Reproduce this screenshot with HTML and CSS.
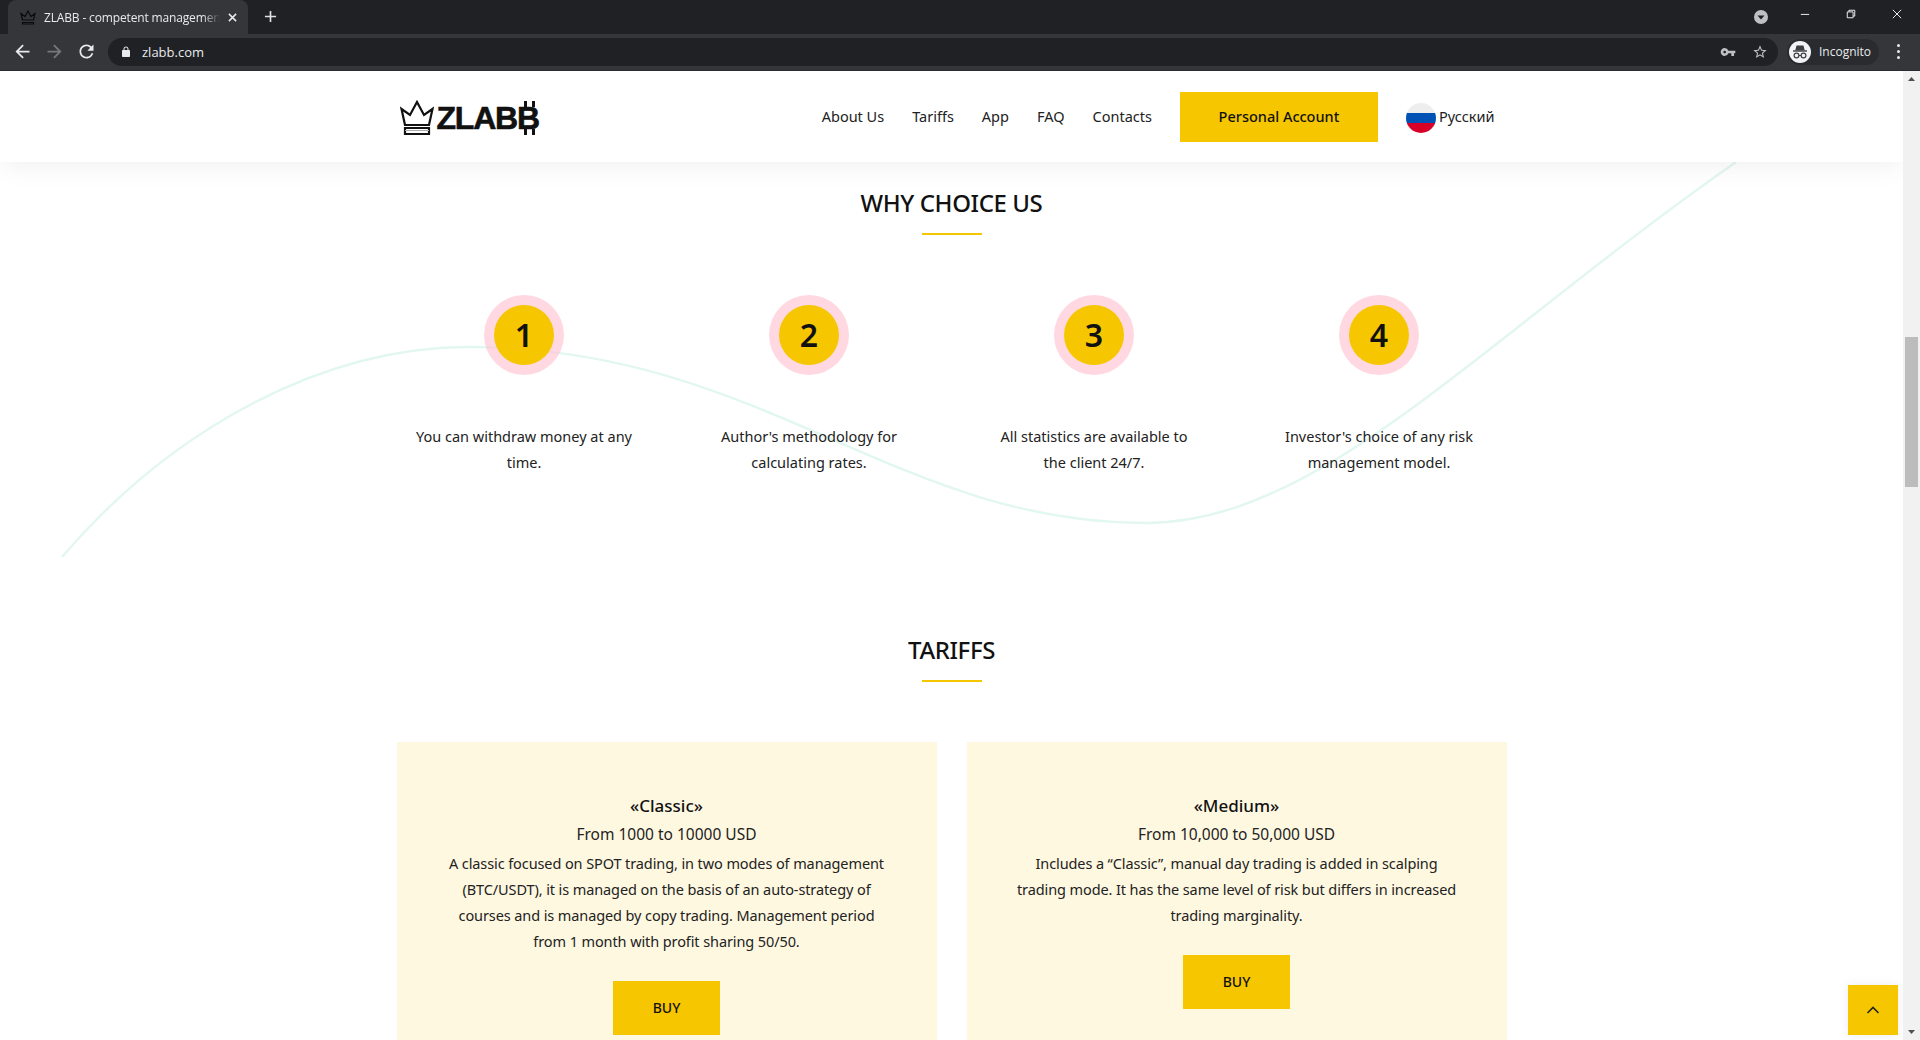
FILE: index.html
```html
<!DOCTYPE html>
<html lang="en">
<head>
  <meta charset="UTF-8" />
  <title>ZLABB - competent management</title>
  <link rel="stylesheet" href="styles.css">
</head>
<body>

<div class="tabstrip">
  <div class="tab">
    <svg class="tab-icon" viewBox="0 0 32 30" fill="none" stroke="#0b0b0c" stroke-width="2.4"><path d="M5 20 2 7l8 6 6-11 6 11 8-6-3 13z"/><path d="M5 25h22v3H5z"/></svg>
    <span class="tab-title">ZLABB - competent management</span>
    <svg class="tab-close" viewBox="0 0 10 10" fill="none" stroke="#e8eaed" stroke-width="1.7"><path d="M1 1l8 8M9 1 1 9"/></svg>
  </div>
  <svg class="new-tab" viewBox="0 0 14 14" fill="none" stroke="#dfe1e5" stroke-width="1.8"><path d="M7 1v12M1 7h12"/></svg>
  <div class="tab-spacer"></div>
  <span class="tab-search"><svg viewBox="0 0 14 14"><path d="M3.5 5.5h7L7 9.5z" fill="#202124"/></svg></span>
  <div class="win-buttons">
    <svg viewBox="0 0 12 12" fill="none" stroke="#e8eaed" stroke-width="1.2"><path d="M1 6.500h10"/></svg>
    <svg viewBox="0 0 12 12" fill="none" stroke="#e8eaed" stroke-width="1.2"><path d="M1.500 3.500h7v7h-7zM3.500 3.500v-2h7v7h-2"/></svg>
    <svg viewBox="0 0 12 12" fill="none" stroke="#e8eaed" stroke-width="1.2"><path d="M1 1l10 10M11 1 1 11"/></svg>
  </div>
</div>

<div class="toolbar">
  <svg class="tool-icon" viewBox="0 0 24 24" fill="#e8eaed"><path d="M20 11H7.83l5.59-5.59L12 4l-8 8 8 8 1.41-1.41L7.83 13H20v-2z"/></svg>
  <svg class="tool-icon" viewBox="0 0 24 24" fill="#76787b"><path d="M4 11h12.17l-5.59-5.59L12 4l8 8-8 8-1.41-1.41L16.17 13H4v-2z"/></svg>
  <svg class="tool-icon" viewBox="0 0 24 24" fill="#e8eaed"><path d="M17.65 6.35A7.958 7.958 0 0 0 12 4c-4.42 0-7.99 3.58-7.99 8s3.57 8 7.99 8c3.73 0 6.84-2.55 7.73-6h-2.08A5.99 5.99 0 0 1 12 18c-3.31 0-6-2.69-6-6s2.69-6 6-6c1.66 0 3.14.69 4.22 1.78L13 11h7V4l-2.35 2.35z"/></svg>
  <div class="omnibox">
    <svg class="lock" viewBox="0 0 24 24" fill="#e8eaed"><path d="M18 8h-1V6c0-2.76-2.24-5-5-5S7 3.24 7 6v2H6c-1.1 0-2 .9-2 2v10c0 1.1.9 2 2 2h12c1.1 0 2-.9 2-2V10c0-1.1-.9-2-2-2zM9 6c0-1.66 1.34-3 3-3s3 1.34 3 3v2H9V6z"/></svg>
    <span class="url">zlabb.com</span>
    <svg class="omni-icon" viewBox="0 0 24 24" fill="#bdc1c6"><path d="M12.65 10A5.99 5.99 0 0 0 7 6c-3.31 0-6 2.69-6 6s2.69 6 6 6a5.99 5.99 0 0 0 5.65-4H17v4h4v-4h2v-4H12.65zM7 14c-1.1 0-2-.9-2-2s.9-2 2-2 2 .9 2 2-.9 2-2 2z"/></svg>
    <svg class="omni-icon" viewBox="0 0 24 24" fill="#bdc1c6"><path d="M22 9.24l-7.19-.62L12 2 9.19 8.63 2 9.24l5.46 4.73L5.82 21 12 17.27 18.18 21l-1.63-7.03L22 9.24zM12 15.4l-3.76 2.27 1-4.28-3.32-2.88 4.38-.38L12 6.1l1.71 4.04 4.38.38-3.32 2.88 1 4.28L12 15.4z"/></svg>
  </div>
  <div class="profile">
    <span class="avatar">
      <svg viewBox="0 0 22 22" fill="none" stroke="#3c4043" stroke-width="1.2"><path d="M7 9l1-4h6l1 4z" fill="#3c4043"/><path d="M4 10h14" stroke-width="1.4"/><circle cx="7.500" cy="14.500" r="2.400"/><circle cx="14.500" cy="14.500" r="2.400"/><path d="M10 14.500h2"/></svg>
    </span>
    <span class="profile-name">Incognito</span>
  </div>
  <div class="dots"><i></i><i></i><i></i></div>
</div>

<div class="viewport">
  <div class="page">
    <svg class="curve" viewBox="0 0 1903 969" fill="none"><path d="M62 486C170 360 320 276 469 276C760 276 894 452 1145 452C1320 452 1480 270 1736 91" stroke="#e2f7ef" stroke-width="2.4"/></svg>

    <header class="site-header">
      <div class="container header-row">
        <a class="logo">
          <svg class="logo-crown" viewBox="0 0 34 36" fill="none" stroke="#111" stroke-width="2.2"><path d="M5 25 1.500 9 10 15 17 2l7 13 8.500-6L29 25z"/><path d="M5 28h24v6H5z"/><path d="M5 30.500h24" stroke="#aaa" stroke-width="1"/></svg>
          <span class="logo-text">ZLAB<span class="logo-btc">B</span></span>
        </a>
        <nav class="site-nav">
          <a>About Us</a>
          <a>Tariffs</a>
          <a>App</a>
          <a>FAQ</a>
          <a>Contacts</a>
          <a class="account-btn">Personal Account</a>
          <a class="lang"><span class="flag"></span><span class="lang-name">Русский</span></a>
        </nav>
      </div>
    </header>

    <section class="container why">
      <h2 class="section-title">WHY CHOICE US</h2>
      <div class="why-grid">
        <div class="why-item">
          <div class="why-ring"><div class="why-num">1</div></div>
          <p>You can withdraw money at any<br>time.</p>
        </div>
        <div class="why-item">
          <div class="why-ring"><div class="why-num">2</div></div>
          <p>Author's methodology for<br>calculating rates.</p>
        </div>
        <div class="why-item">
          <div class="why-ring"><div class="why-num">3</div></div>
          <p>All statistics are available to<br>the client 24/7.</p>
        </div>
        <div class="why-item">
          <div class="why-ring"><div class="why-num">4</div></div>
          <p>Investor's choice of any risk<br>management model.</p>
        </div>
      </div>
    </section>

    <section class="container tariffs">
      <h2 class="section-title">TARIFFS</h2>
      <div class="tariff-grid">
        <div class="tariff-card">
          <h3>«Classic»</h3>
          <div class="tariff-range">From 1000 to 10000 USD</div>
          <p>A classic focused on SPOT trading, in two modes of management<br>(BTC/USDT), it is managed on the basis of an auto-strategy of<br>courses and is managed by copy trading. Management period<br>from 1 month with profit sharing 50/50.</p>
          <a class="buy-btn">BUY</a>
        </div>
        <div class="tariff-card">
          <h3>«Medium»</h3>
          <div class="tariff-range">From 10,000 to 50,000 USD</div>
          <p>Includes a “Classic”, manual day trading is added in scalping<br>trading mode. It has the same level of risk but differs in increased<br>trading marginality.</p>
          <a class="buy-btn">BUY</a>
        </div>
      </div>
    </section>

    <a class="to-top"><svg viewBox="0 0 14 10" fill="none" stroke="#222" stroke-width="1.6"><path d="M1.500 8 7 2.500 12.500 8"/></svg></a>
  </div>

  <div class="scrollbar">
    <svg viewBox="0 0 17 17"><path d="M5 10l3.500-4 3.500 4z" fill="#505050"/></svg>
    <div class="scroll-track"><div class="scroll-thumb"></div></div>
    <svg viewBox="0 0 17 17"><path d="M5 7l3.500 4 3.500-4z" fill="#505050"/></svg>
  </div>
</div>

</body>
</html>
```
FILE: styles.css
```css
html, body {
  margin: 0;
  height: 1040px;
  overflow: hidden;
}

body {
  display: flex;
  flex-direction: column;
  font-family: "Noto Sans", sans-serif;
  background: #fff;
  color: #222;
}

/* browser top */

.tabstrip {
  flex: none;
  height: 34px;
  display: flex;
  align-items: flex-end;
  padding-left: 8px;
  background: #202124;
  font-family: "Open Sans", sans-serif;
}

.tab {
  width: 240px;
  height: 34px;
  box-sizing: border-box;
  padding: 0 11px 0 12px;
  display: flex;
  align-items: center;
  background: #35363a;
  border-radius: 8px 8px 0 0;
  color: #e8eaed;
  font-size: 12px;
}

.tab-icon {
  width: 16px;
  height: 15px;
  margin-right: 8px;
  flex: none;
}

.tab-title {
  flex: 1;
  overflow: hidden;
  white-space: nowrap;
  letter-spacing: -0.15px;
  -webkit-mask-image: linear-gradient(to right, #000 90%, transparent);
  mask-image: linear-gradient(to right, #000 90%, transparent);
}

.tab-close {
  width: 9px;
  height: 9px;
  margin-left: 8px;
  flex: none;
}

.new-tab {
  width: 13px;
  height: 13px;
  margin: 0 0 11px 16px;
}

.tab-spacer {
  flex: 1;
}

.tab-search {
  width: 14px;
  height: 14px;
  margin-bottom: 10px;
  border-radius: 50%;
  background: #bdc1c6;
}

.tab-search svg {
  display: block;
}

.win-buttons {
  align-self: flex-start;
  display: flex;
  gap: 36px;
  margin: 9px 18px 0 32px;
}

.win-buttons svg {
  display: block;
  width: 10px;
  height: 10px;
}

.toolbar {
  flex: none;
  height: 37px;
  box-sizing: border-box;
  padding: 0 20px 1px 12px;
  display: flex;
  align-items: center;
  gap: 11px;
  background: #35363a;
  border-bottom: 1px solid #2a2b2e;
}

.tool-icon {
  width: 21px;
  height: 21px;
  flex: none;
}

.omnibox {
  flex: 1;
  height: 28px;
  padding: 0 10px 0 12px;
  display: flex;
  align-items: center;
  border-radius: 14px;
  background: #202124;
  color: #e8eaed;
  font-family: "Open Sans", sans-serif;
  font-size: 13px;
}

.lock {
  width: 12px;
  height: 12px;
  margin-right: 10px;
}

.url {
  flex: 1;
}

.omni-icon {
  width: 16px;
  height: 16px;
  margin-left: 16px;
}

.profile {
  width: 92px;
  height: 26px;
  margin-left: -2px;
  display: flex;
  align-items: center;
  box-sizing: border-box;
  padding-left: 2px;
  border-radius: 13px;
  background: #2a2b2e;
  color: #e8eaed;
  font-family: "Open Sans", sans-serif;
  font-size: 12px;
}

.avatar {
  width: 22px;
  height: 22px;
  margin-right: 8px;
  border-radius: 50%;
  background: #f1f3f4;
}

.avatar svg {
  display: block;
}

.dots {
  display: flex;
  flex-direction: column;
  gap: 3px;
  margin-left: 7px;
}

.dots i {
  width: 3px;
  height: 3px;
  border-radius: 50%;
  background: #e8eaed;
}

/* page */

.viewport {
  flex: 1;
  display: flex;
  min-height: 0;
}

.page {
  position: relative;
  flex: 1;
  overflow: hidden;
}

.curve {
  position: absolute;
  top: 0;
  left: 0;
  width: 1903px;
  height: 969px;
}

.container {
  position: relative;
  width: 1110px;
  margin: 0 auto;
}

.site-header {
  position: relative;
  z-index: 2;
  height: 91px;
  background: #fff;
  box-shadow: 0 0 30px rgba(0,0,0,0.08);
}

.header-row {
  height: 91px;
  display: flex;
  align-items: center;
  justify-content: space-between;
}

.logo {
  display: flex;
  align-items: center;
  gap: 3px;
  margin: 3px 0 0 3px;
  font-family: "Liberation Sans", sans-serif;
  font-size: 32px;
  font-weight: bold;
  letter-spacing: -1.2px;
  color: #111;
  -webkit-text-stroke: 0.6px #111;
}

.logo-crown {
  width: 34px;
  height: 36px;
}

.logo-btc {
  position: relative;
}

.logo-btc::before,
.logo-btc::after {
  content: "";
  position: absolute;
  left: 7px;
  width: 11px;
  height: 6px;
  box-sizing: border-box;
  border-left: 3px solid #111;
  border-right: 3px solid #111;
}

.logo-btc::before {
  top: 1px;
}

.logo-btc::after {
  top: 29px;
}

.site-nav {
  display: flex;
  align-items: center;
  gap: 28px;
  margin: 1px 12px 0 0;
  font-size: 14.5px;
}

.site-nav a {
  padding-bottom: 2px;
}

.site-nav .account-btn {
  width: 198px;
  height: 50px;
  box-sizing: border-box;
  display: flex;
  align-items: center;
  justify-content: center;
  background: #f6c700;
  color: #111;
  font-weight: 500;
}

.site-nav .lang {
  display: flex;
  align-items: center;
  gap: 3px;
  padding-bottom: 0;
}

.flag {
  width: 30px;
  height: 30px;
  margin-top: 2px;
  border-radius: 50%;
  background: linear-gradient(#eee 33%, #0052b4 33%, #0052b4 67%, #d80027 67%);
}

.lang-name {
  padding-bottom: 2px;
}

.section-title {
  margin: 0;
  text-align: center;
  font-size: 24px;
  line-height: 30px;
  font-weight: 500;
  letter-spacing: -0.4px;
  color: #111;
}

.section-title::after {
  content: "";
  display: block;
  width: 60px;
  height: 2px;
  margin: 15px auto 0;
  background: #f6c700;
}

.why {
  padding-top: 26px;
}

.why-grid {
  display: grid;
  grid-template-columns: repeat(4, 285px);
  margin: 60px -15px 0;
}

.why-item {
  text-align: center;
}

.why-ring {
  width: 80px;
  height: 80px;
  margin: 0 auto;
  display: flex;
  align-items: center;
  justify-content: center;
  border-radius: 50%;
  background: rgba(255, 190, 205, 0.6);
}

.why-num {
  width: 60px;
  height: 60px;
  line-height: 60px;
  border-radius: 50%;
  background: #f6c700;
  color: #111;
  font-size: 32px;
  font-weight: 600;
}

.why-item p {
  margin: 48px 0 0;
  font-size: 14.5px;
  line-height: 26px;
}

.tariffs {
  padding-top: 160px;
}

.tariff-grid {
  display: grid;
  grid-template-columns: 540px 540px;
  gap: 30px;
  margin-top: 60px;
}

.tariff-card {
  height: 400px;
  box-sizing: border-box;
  padding-top: 51px;
  text-align: center;
  background: #fff8e1;
}

.tariff-card h3 {
  margin: 0;
  font-size: 17px;
  line-height: 26px;
  font-weight: 500;
  color: #111;
}

.tariff-range {
  margin-top: 2px;
  font-size: 15.5px;
  line-height: 26px;
}

.tariff-card p {
  margin: 3px 0 27px;
  font-size: 14.5px;
  letter-spacing: -0.1px;
  line-height: 26px;
}

.buy-btn {
  display: block;
  width: 107px;
  height: 54px;
  margin: 0 auto;
  line-height: 54px;
  background: #f6c700;
  color: #111;
  font-size: 14px;
  font-weight: 500;
}

.to-top {
  position: absolute;
  right: 5px;
  bottom: 5px;
  z-index: 3;
  width: 50px;
  height: 50px;
  display: flex;
  align-items: center;
  justify-content: center;
  background: #f6c700;
  box-shadow: 0 0 10px rgba(0,0,0,0.08);
}

.to-top svg {
  width: 14px;
  height: 10px;
}

.scrollbar {
  flex: none;
  width: 17px;
  display: flex;
  flex-direction: column;
  background: #f1f1f1;
}

.scrollbar svg {
  flex: none;
  width: 17px;
  height: 17px;
}

.scroll-track {
  flex: 1;
  padding-top: 249px;
}

.scroll-thumb {
  height: 150px;
  margin: 0 2px;
  background: #bcbcbc;
}
```
